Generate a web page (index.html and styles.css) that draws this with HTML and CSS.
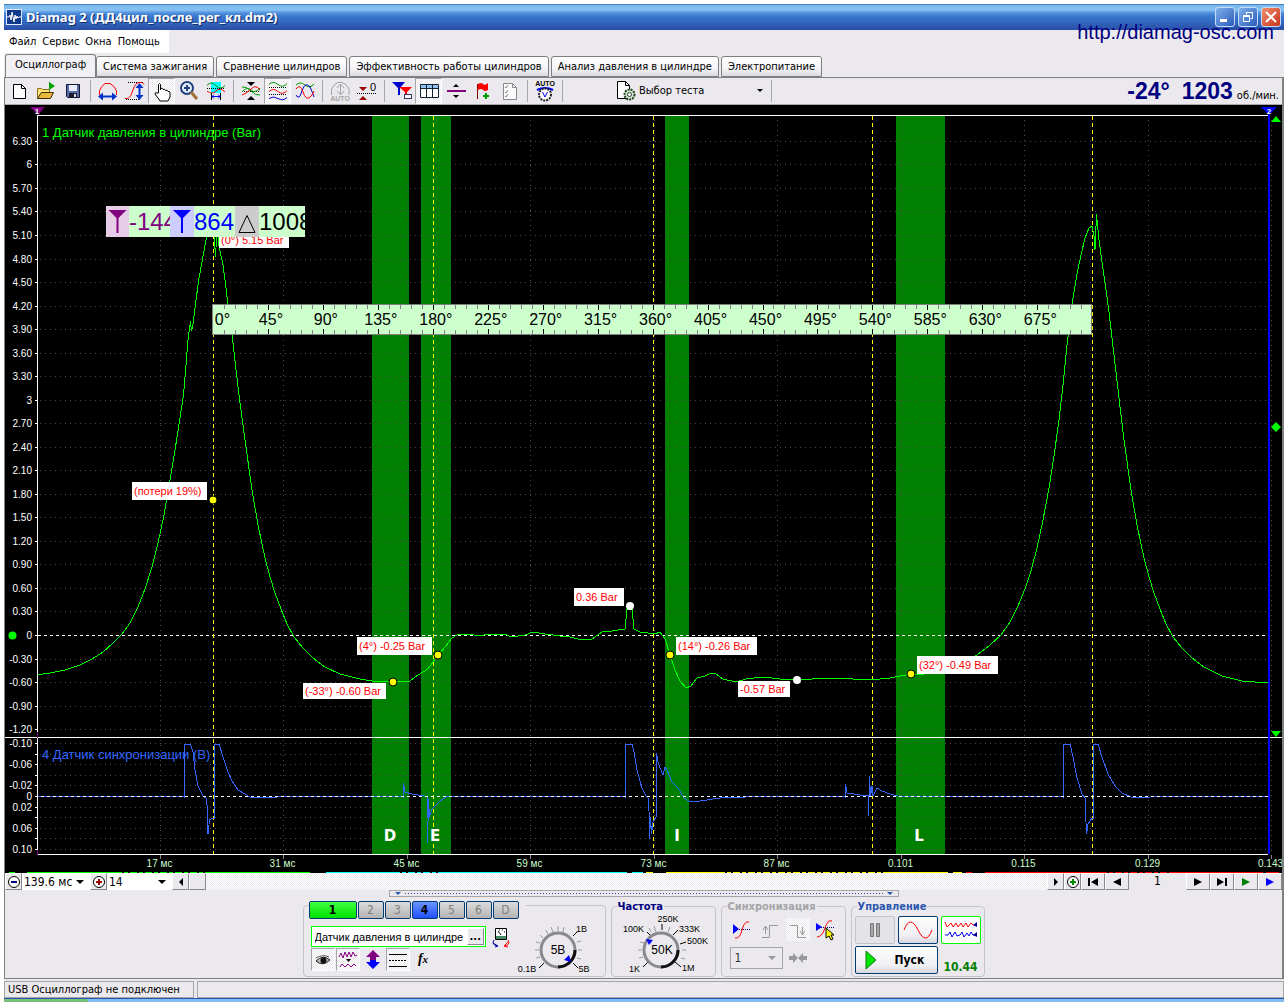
FILE: index.html
```html
<!DOCTYPE html>
<html lang="ru">
<head>
<meta charset="utf-8">
<title>Diamag 2 (ДД4цил_после_рег_кл.dm2)</title>
<link rel="stylesheet" href="styles.css">
</head>
<body>
<div class="window">
  <header class="titlebar">
    <svg class="logo" viewBox="0 0 16 16"><rect width="16" height="16" fill="#dfe9fb"/><rect x="1" y="1" width="14" height="14" fill="#123a8c"/><path d="M1 8h2l1-2 1 5 1-8 2 10 1-7 1 4 1-3 1 2 1-1h2" fill="none" stroke="#fff"/></svg>
    <h1 class="title">Diamag 2 (ДД4цил_после_рег_кл.dm2)</h1>
    <div class="winbtns">
      <button class="winbtn" aria-label="Свернуть"><svg viewBox="0 0 18 18"><rect x="4" y="11" width="7" height="3" fill="#fff"/></svg></button>
      <button class="winbtn" aria-label="Развернуть"><svg viewBox="0 0 18 18" fill="none" stroke="#fff"><path d="M7.500 6.500v-2h6v6h-2M7 4.500h7M4.500 7.500h6v6h-6zM4 8.500h7"/></svg></button>
      <button class="winbtn winbtn-close" aria-label="Закрыть"><svg viewBox="0 0 18 18"><path d="M4 4l10 10M14 4L4 14" stroke="#fff" stroke-width="2"/></svg></button>
    </div>
    <a class="site" href="http://diamag-osc.com">http://diamag-osc.com</a>
  </header>

  <nav class="menu">
    <button>Файл</button><button>Сервис</button><button>Окна</button><button>Помощь</button>
  </nav>

  <nav class="tabs">
    <button class="tab tab-active">Осциллограф</button>
    <button class="tab">Система зажигания</button>
    <button class="tab">Сравнение цилиндров</button>
    <button class="tab">Эффективность работы цилиндров</button>
    <button class="tab">Анализ давления в цилиндре</button>
    <button class="tab">Электропитание</button>
  </nav>

  <main class="page">
    <div class="toolbar">
      <button class="tool" aria-label="Новый"><svg viewBox="0 0 22 22"><path d="M5.500 4.500h8l4 4v10h-12z" fill="#fff" stroke="#000"/><path d="M13.500 4.500v4h4" fill="none" stroke="#000"/></svg></button>
      <button class="tool" aria-label="Открыть"><svg viewBox="0 0 22 22"><path d="M2.500 18.500v-10h4l1 1h7v3" fill="#ffe27a" stroke="#8a6d1a"/><path d="M2.500 18.500l4-6h12l-3 6z" fill="#e8b93c" stroke="#3c2c00"/><path d="M14.500 2v8" stroke="#064"/><path d="M14 2l6 4-6 4z" fill="#00a000"/></svg></button>
      <button class="tool" aria-label="Сохранить"><svg viewBox="0 0 22 22"><path d="M4.500 4.500h13v13h-12l-1-1z" fill="#5b6fae" stroke="#14142c"/><rect x="7" y="5" width="8" height="6" fill="#e8eefc"/><rect x="7" y="13" width="8" height="4" fill="#1c1c30"/><rect x="12" y="14" width="2" height="3" fill="#ddd"/></svg></button>
      <span class="sep"></span>
      <button class="tool" aria-label="Масштаб по времени"><svg viewBox="0 0 22 22"><path d="M2.500 15V11Q4 6 8 3.500h5Q18 6 19.500 11V15" fill="none" stroke="#f00"/><path d="M4 16.500h13" stroke="#03c" stroke-width="2"/><path d="M1 16.500l5-4v8zM20 16.500l-5-4v8z" fill="#03c"/></svg></button>
      <button class="tool" aria-label="Масштаб по уровню"><svg viewBox="0 0 22 22"><path d="M4 2.500h16M2 19.500h14" stroke="#000" stroke-dasharray="1 1"/><path d="M1 18.500h3Q7 17 9 10t6-7.500h3l2 2" fill="none" stroke="#f00"/><path d="M15.500 6v11" stroke="#03c" stroke-width="2"/><path d="M15.500 3l-4 5h8zM15.500 20l-4-5h8z" fill="#03c"/></svg></button>
      <button class="tool pressed" aria-label="Рука"><svg viewBox="0 0 22 22"><path d="M7.500 13V4.500q1-2 2 0V10V8.500q2-1 2.500 1q2-1 2.500 1q2-1 2.500 1q2-.5 2 1.500v4l-2 4h-8l-2-3-3-4q0-2 2-1z" fill="#fff" stroke="#000"/></svg></button>
      <button class="tool" aria-label="Лупа"><svg viewBox="0 0 22 22"><circle cx="9" cy="8" r="6" fill="#dfeefc" stroke="#24407c" stroke-width="2"/><path d="M6 8h6M9 5v6" stroke="#24407c" stroke-width="2"/><path d="M13 12l6 7" stroke="#a07030" stroke-width="3"/></svg></button>
      <button class="tool" aria-label="Фрагмент"><svg viewBox="0 0 22 22"><rect x="6" y="2" width="10" height="11" fill="#0ff"/><path d="M2 5.500q4-5 9 0t9 0" fill="none" stroke="#080"/><path d="M2 8.500h18" stroke="#000" stroke-dasharray="1 1"/><path d="M2 11q5 4 9 0t9 1" fill="none" stroke="#f00"/><path d="M6.500 13v7M15.500 13v7" stroke="#000"/><path d="M7 16.500h8M9 14.500l-2 2 2 2M13 14.500l2 2-2 2" fill="none" stroke="#00f"/></svg></button>
      <span class="sep"></span>
      <button class="tool" aria-label="Совместить"><svg viewBox="0 0 22 22"><path d="M7 2h8l-4 4zM7 20h8l-4-4z"/><path d="M2 11.500h18" stroke="#000" stroke-dasharray="1 1"/><path d="M2 7q4-1 9 4t9 4M2 12q5-6 9-2t9-2" fill="none" stroke="#090"/><path d="M2 15q4-1 9-6t9 1" fill="none" stroke="#f00"/></svg></button>
      <button class="tool pressed" aria-label="Раздельно"><svg viewBox="0 0 22 22"><path d="M2 4.500q4-4 9 0t9-1" fill="none" stroke="#090"/><path d="M2 7.500h18M2 14.500h18" stroke="#000" stroke-dasharray="1 1"/><path d="M2 11.500q4-4 9 0t9-1" fill="none" stroke="#f00"/><path d="M2 18.500q4-3 9 0t9-1" fill="none" stroke="#00c"/></svg></button>
      <button class="tool" aria-label="Наложение"><svg viewBox="0 0 22 22"><path d="M2 5q4-4 9 0t9-1" fill="none" stroke="#090"/><path d="M2 15q3 6 6-4t8-4q2 4 4 10" fill="none" stroke="#00c"/><path d="M2 9q4-6 7 3t7 5q2-1 4-6" fill="none" stroke="#f00"/></svg></button>
      <span class="sep"></span>
      <button class="tool" disabled aria-label="Авто"><svg viewBox="0 0 22 22"><path d="M2.500 15V9Q6 3 9 2.500h4Q17 3 20 9V15M11.500 5v9M8 8l3.500-4L15 8M8 11l3.500 4L15 11" fill="none" stroke="#a5a5a8"/><text x="11" y="21" class="tiny" fill="#a5a5a8">AUTO</text></svg></button>
      <button class="tool" aria-label="Ноль"><svg viewBox="0 0 22 22"><path d="M3 7h8l-4 4zM3 20h8l-4-4z" fill="#900"/><path d="M1 13.500h20" stroke="#000" stroke-dasharray="1 1"/><text x="17" y="11" class="small">0</text></svg></button>
      <span class="sep"></span>
      <button class="tool" aria-label="Маркеры"><svg viewBox="0 0 22 22"><path d="M1 2h13L9 8v7H7V8z" fill="#00c"/><path d="M8 7h13l-5 5v4h-2v-4z" fill="#f00"/><rect x="13.500" y="14.500" width="7" height="4" fill="#fff" stroke="#336"/></svg></button>
      <button class="tool pressed" aria-label="Таблица"><svg viewBox="0 0 22 22"><path d="M2.500 4.500h18v13h-18z" fill="#fff" stroke="#123"/><path d="M3 5h17v3H3z" fill="#8fc0f0"/><path d="M3 8.500h17M8.500 5v13M14.500 5v13" stroke="#123"/></svg></button>
      <button class="tool" aria-label="Разделить"><svg viewBox="0 0 22 22"><path d="M2 11h19" stroke="#800080" stroke-width="2"/><path d="M8 7h6l-3-3zM8 15h6l-3 3z"/></svg></button>
      <button class="tool" aria-label="Флаг"><svg viewBox="0 0 22 22"><path d="M5.500 4v15" stroke="#800000"/><path d="M6 4q3-2 5 0t5-1v7q-3 2-5 0t-5 0z" fill="#f00"/><path d="M11 16h6M14 13v6" stroke="#090" stroke-width="2"/></svg></button>
      <button class="tool" disabled aria-label="Список"><svg viewBox="0 0 22 22"><path d="M4.500 3.500h9l4 4v12h-13z" fill="#fafafa" stroke="#888"/><path d="M13.500 3.500v4h4M6 7l1 1 2-3M6 12l1 1 2-3M6 16l1 1 2-3" fill="none" stroke="#888"/></svg></button>
      <span class="sep"></span>
      <button class="tool" aria-label="Авто напряжение"><svg viewBox="0 0 22 22"><text x="11" y="6" class="tiny">AUTO</text><path d="M3 10q8-4 16 0" fill="none" stroke="#00f" stroke-width="2"/><circle cx="11" cy="14.500" r="6" fill="#fff" stroke="#222" stroke-width="2" stroke-dasharray="2 1"/><path d="M8.500 12l2.500 5 2.500-5" fill="none" stroke="#00f"/></svg></button>
      <span class="sep"></span>
      <label class="test">
        <svg viewBox="0 0 22 22"><path d="M3.500 1.500h8l4 4v13h-12z" fill="#fff" stroke="#000"/><path d="M11.500 1.500v4h4" fill="none" stroke="#000"/><circle cx="15.500" cy="14.500" r="5" fill="#cfe8cf" stroke="#264026" stroke-width="2" stroke-dasharray="2 1"/><circle cx="15.500" cy="14.500" r="2" fill="#fff" stroke="#264026"/></svg>
        <span class="pick"><select aria-label="Выбор теста"><option>Выбор теста</option></select></span>
      </label>
      <span class="sep"></span>
      <p class="rpm"><b>-24°</b><b>1203</b> об./мин.</p>
    </div>

    <svg id="scope" class="scope" viewBox="5 105 1277 768" role="img" aria-label="Осциллограмма"></svg>

    <div class="scroll">
      <button class="flat" aria-label="Уменьшить"><svg viewBox="0 0 14 14"><circle cx="7" cy="7" r="5.500" fill="#fff" stroke="#000"/><path d="M4 7h6" stroke="#000080" stroke-width="2"/></svg></button>
      <span class="pick pick-span"><select aria-label="Длительность"><option>139.6 мс</option></select></span>
      <button class="flat" aria-label="Увеличить"><svg viewBox="0 0 14 14"><circle cx="7" cy="7" r="5.500" fill="#fff" stroke="#000"/><path d="M4 7h6M7 4v6" stroke="#900" stroke-width="2"/></svg></button>
      <span class="pick pick-zoom"><select aria-label="Масштаб"><option>14</option></select></span>
      <button class="flat" aria-label="Влево"><svg viewBox="0 0 14 14"><path d="M9 3v8L5 7z"/></svg></button>
      <div class="track"><button class="flat" aria-label="Ползунок"></button></div>
      <button class="flat" aria-label="Вправо"><svg viewBox="0 0 14 14"><path d="M5 3v8l4-4z"/></svg></button>
      <button class="flat" aria-label="Добавить"><svg viewBox="0 0 14 14"><circle cx="7" cy="7" r="5.500" fill="#fff" stroke="#000"/><path d="M4 7h6M7 4v6" stroke="#080" stroke-width="2"/></svg></button>
      <button class="flat wide" aria-label="В начало"><svg viewBox="0 0 14 14"><path d="M2 3h2v8H2zM12 3v8L5 7z"/></svg></button>
      <button class="flat wide" aria-label="Назад"><svg viewBox="0 0 14 14"><path d="M11 3v8L3 7z"/></svg></button>
      <output class="frame">1</output>
      <button class="flat wide" aria-label="Вперёд"><svg viewBox="0 0 14 14"><path d="M3 3v8l8-4z"/></svg></button>
      <button class="flat wide" aria-label="В конец"><svg viewBox="0 0 14 14"><path d="M10 3h2v8h-2zM2 3v8l7-4z"/></svg></button>
      <button class="flat wide" aria-label="Воспроизвести"><svg viewBox="0 0 14 14"><path d="M3 3v8l8-4z" fill="#008000"/></svg></button>
      <button class="flat wide" aria-label="Далее"><svg viewBox="0 0 14 14"><path d="M3 3v8l8-4z" fill="#00f"/></svg></button>
    </div>

    <div class="splitter"><i></i><span></span><i></i></div>

    <div class="panels">
      <fieldset class="box box-channel" aria-label="Каналы">
        <div class="channels">
          <button class="ch ch-one">1</button><button class="ch" disabled>2</button><button class="ch" disabled>3</button><button class="ch ch-four">4</button><button class="ch" disabled>5</button><button class="ch" disabled>6</button><button class="ch" disabled>D</button>
        </div>
        <div class="chbody">
          <div class="chset">
            <div class="sensor">
              <div class="sensor-box"><input type="text" aria-label="Датчик" value="Датчик давления в цилиндре"><button class="flat" aria-label="Выбрать датчик">...</button></div>
              <button class="tool tool-sm" aria-label="Прибор"><svg viewBox="0 0 22 22"><path d="M5.500 2.500h11v11h-11z" fill="#fff" stroke="#000"/><path d="M6 10h10v3H6z" fill="#486"/><path d="M9 4h1M12 4h1M14 6h1M8 5l3 4" stroke="#000"/><path d="M8 20Q1 19 4 14M3 17l5 3-3 1" fill="none" stroke="#00a"/><path d="M14 20q7-1 4-6M19 15l-5 5 4 1" fill="none" stroke="#f00"/></svg></button>
            </div>
            <div class="views">
              <button class="tool tool-sm pressed" aria-label="Показать"><svg viewBox="0 0 22 22"><path d="M4 12q7-7 14-1-7 7-14 1z" fill="#bbb" stroke="#222"/><circle cx="11.500" cy="11.500" r="3" fill="#111"/><path d="M4 9q7-4 13-1" fill="none" stroke="#555"/></svg></button>
              <button class="tool tool-sm pressed" aria-label="Фильтр"><svg viewBox="0 0 22 22"><path d="M2 8l2-4 2 5 2-6 2 5 2-5 2 5 2-5 2 4 2-1M3 18l2-3 3 3 3-3 3 3 3-3 2 2" fill="none" stroke="#800080"/><path d="M9 10h5l-2.500 3z"/></svg></button>
              <button class="tool tool-sm" aria-label="Инверсия"><svg viewBox="0 0 22 22"><path d="M11 1l7 7h-4v3H8V8H4z" fill="#800080"/><path d="M11 20l7-7h-4v-2H8v2H4z" fill="#00f"/></svg></button>
              <button class="tool tool-sm pressed" aria-label="Уровни"><svg viewBox="0 0 22 22"><path d="M2 5.500h18M2 17.500h18" stroke="#000"/><path d="M2 11.500h18" stroke="#000" stroke-dasharray="2 1"/></svg></button>
              <button class="tool tool-sm" aria-label="Функция"><svg viewBox="0 0 22 22"><text x="11" y="14" class="fx">f<tspan class="fx-x">x</tspan></text></svg></button>
            </div>
          </div>
          <svg class="knob" viewBox="0 0 90 57" width="90" height="57" role="img" aria-label="Чувствительность">
            <g stroke="#999"><path d="M22 31h4M23 23l4 1M27 16l3 3M33 11l2 4M38 8l2 5M45 7v5M51 8l-1 5M64 23l4-1M65 31h4M64 39l4 1M23 39l4-1"/></g>
            <path d="M60 17l4-4M60 44l5 5M31 44l-5 5" stroke="#000"/>
            <circle cx="45" cy="31" r="17" class="dial"/><path d="M45 48A17 17 0 0 0 62 31" class="dial-shade"/>
            <path d="M58 43l-7-2 5-5z" fill="#00f"/>
            <text x="45" y="35" class="value">5В</text><text x="63" y="13">1В</text><text x="14" y="53" text-anchor="middle">0.1В</text><text x="71" y="53" text-anchor="middle">5В</text>
          </svg>
        </div>
      </fieldset>

      <fieldset class="box box-freq"><legend>Частота</legend>
        <svg class="knob" viewBox="0 0 103 64" width="103" height="64" role="img" aria-label="50K">
          <g stroke="#999"><path d="M26 38h4M27 46l4-1M28 30l4 1M42 14l2 6M37 16l2 4M58 15l-2 5M69 46l4 1M70 38h4"/></g>
          <path d="M50 12v6M35 20l5 5M61 23l5-5M68 32l6-2M63 50l6 5M36 50l-5 5" stroke="#000"/>
          <circle cx="49" cy="38" r="17" class="dial"/><path d="M49 55A17 17 0 0 0 66 38" class="dial-shade"/>
          <path d="M34 27l7 1-4 5z" fill="#00f"/>
          <text x="50" y="42" class="value">50K</text><text x="56" y="10" text-anchor="middle">250K</text><text x="11" y="20">100K</text><text x="67" y="20">333K</text><text x="75" y="32">500K</text><text x="17" y="60">1K</text><text x="70" y="59">1M</text>
        </svg>
      </fieldset>

      <fieldset class="box box-sync"><legend>Синхронизация</legend>
        <div class="syncrow">
          <button class="tool tool-sm" aria-label="Уровень"><svg viewBox="0 0 22 22"><path d="M2 5l6 5-6 5z" fill="#00f"/><path d="M6 10.500h13" stroke="#009" stroke-dasharray="1 1"/><path d="M4 19q5 1 7-8t7-8" fill="none" stroke="#f00"/></svg></button>
          <button class="tool tool-sm" disabled aria-label="Фронт"><svg viewBox="0 0 22 22"><path d="M3 18.500h7.500v-12H19M6.500 8v7M4 11l2.500-4L9 11" fill="none" stroke="#999"/></svg></button>
          <button class="tool tool-sm dither" disabled aria-label="Спад"><svg viewBox="0 0 22 22"><path d="M3 6.500h7.500v12H19M15.500 8v7M13 12l2.500 4L18 12" fill="none" stroke="#999"/></svg></button>
          <button class="tool tool-sm" aria-label="Захват"><svg viewBox="0 0 22 22"><path d="M1 4l6 4-6 4z" fill="#00f"/><path d="M6 8.500h14" stroke="#009" stroke-dasharray="1 1"/><path d="M2 18q5 0 8-9t7-7" fill="none" stroke="#f00"/><path d="M11 9v10l3-2 2 4 2-1-2-4h3z" fill="#ff0" stroke="#000"/></svg></button>
        </div>
        <div class="syncrow">
          <span class="pick pick-sync"><select disabled aria-label="Канал синхронизации"><option>1</option></select></span>
          <svg class="merge" viewBox="0 0 22 22"><path d="M2 9h4V6l5 5-5 5v-3H2zM20 9h-4V6l-5 5 5 5v-3h4z" fill="#999"/></svg>
        </div>
      </fieldset>

      <fieldset class="box box-run"><legend>Управление</legend>
        <div class="run">
          <button class="xp" disabled aria-label="Пауза"><svg viewBox="0 0 34 22"><path d="M12.500 4.500h3v13h-3zM18.500 4.500h3v13h-3z" fill="#aaa" stroke="#777"/></svg></button>
          <button class="xp" aria-label="Один сигнал"><svg viewBox="0 0 34 22"><path d="M3 11Q9-5 17 11t14 0" fill="none" stroke="#f00"/></svg></button>
          <button class="xp xp-on" aria-label="Все сигналы"><svg viewBox="0 0 34 22"><path d="M1 3l2 5 2-2 2-2 2 4 3-4 2 4 3-4 2 4 3-4 2 4 3-4 2 2h4" fill="none" stroke="#f00"/><path d="M1 16h3l2-3 2 5 3-5 2 4 3-1 2-3 2 5 3-4 2 3 2-4 2 3h3" fill="none" stroke="#00f"/><path d="M33 3v5l-4-2zM33 13v5l-4-2z" fill="#009"/></svg></button>
          <button class="xp xp-start"><svg viewBox="0 0 12 20"><path d="M1 1l10 9L1 19z" fill="#00e600" stroke="#087808"/></svg>Пуск</button>
          <output class="clock">10.44</output>
        </div>
      </fieldset>
    </div>
  </main>

  <footer class="status"><span>USB Осциллограф не подключен</span><span></span></footer>
  <div class="taskbar"><i></i></div>
</div>
<script src="scope.js"></script>
</body>
</html>
```
FILE: styles.css
```css
* { box-sizing: border-box; }
body {
  margin: 0;
  background: #fff;
  color: #000;
  font: 11px/14px Tahoma, "DejaVu Sans Condensed", "DejaVu Sans", sans-serif;
}
button, input, select, fieldset, legend, p, h1 { font: inherit; color: inherit; margin: 0; padding: 0; }
button { border: 0; background: none; }
svg { display: block; }
.window { margin: 4px 4px 0; }

/* title bar */
.titlebar {
  position: relative;
  display: flex;
  align-items: center;
  gap: 4px;
  height: 26px;
  padding: 0 3px 0 2px;
  background: linear-gradient(#1c48a8 0, #7ab8ee 1px, #86c2f2 6px, #4f8fdc 9px, #3576cd 13px, #3468bf 18px, #2a50a8 25px);
}
.logo { width: 16px; height: 16px; }
.title { flex: 1; color: #fff; font: bold 13px/18px "Noto Sans", "Open Sans", sans-serif; text-shadow: 1px 1px #16306c; white-space: nowrap; }
.winbtns { display: flex; gap: 3px; }
.winbtn {
  width: 20px; height: 20px;
  border: 1px solid #c4dcfa; border-radius: 3px;
  background: linear-gradient(135deg, #7fb0ee, #2a5cb8);
}
.winbtn-close { background: linear-gradient(135deg, #f0906c, #c8341c); }
.site {
  position: absolute; right: 10px; top: 16px;
  color: #000080; font: 20px/24px "Liberation Sans", Arial, sans-serif; text-decoration: none;
}

/* menu and tabs */
.menu, .tabs { background: #ebe9ed; }
.menu { display: flex; height: 24px; padding-bottom: 1px; }
.menu button { background: #fff; padding: 0 3px; }
.menu button:first-child { padding-left: 5px; }
.menu button:last-child { padding-right: 9px; }
.tabs { display: flex; align-items: flex-end; gap: 2px; height: 23px; padding-left: 1px; }
.tab {
  height: 21px; padding: 0 6px;
  border: 1px solid #7f7f7f; border-radius: 3px 3px 0 0;
  background: linear-gradient(#fff, #f4f4f6 60%, #dcdbe2);
  white-space: nowrap;
}
.tab-active { height: 23px; padding: 0 9px 2px; border-bottom: 0; background: #f1f0f4; margin-right: -2px; }

.page { border: solid #808080; border-width: 0 2px 1px 1px; background: #ebe9ed; }
.toolbar {
  display: flex; align-items: center;
  height: 28px; padding-bottom: 1px;
  border-top: 1px solid #808080; border-bottom: 1px solid #a8a8ac;
}
.tool { width: 27px; height: 26px; display: grid; place-items: center; }
.tool svg, .merge { width: 22px; height: 22px; }
.tool-sm { width: 24px; height: 23px; }
.pressed, .dither, .track {
  background: repeating-conic-gradient(#fff 0 25%, #ebe9ed 0 50%) 0 0 / 2px 2px;
}
.pressed { border: 1px solid #a5a5a8; border-right-color: #fff; border-bottom-color: #fff; }
.sep { width: 8px; height: 22px; background: linear-gradient(90deg, transparent 4px, #a8a8ac 4px 5px, transparent 5px); }
.tiny { font: bold 7px "Liberation Sans", sans-serif; text-anchor: middle; }
.small { font: 11px "Liberation Sans", sans-serif; text-anchor: middle; }
.fx { font: italic bold 14px "Liberation Serif", serif; text-anchor: middle; }
.fx-x { font-size: 11px; }
.test { display: flex; align-items: center; width: 201px; padding-left: 48px; gap: 3px; }
.test svg { width: 22px; height: 22px; }
.test .pick { flex: 1; }

/* drop-down with its own arrow */
.pick { display: grid; align-items: center; }
.pick select {
  grid-area: 1 / 1; appearance: none; width: 100%; height: 100%;
  border: 0; border-radius: 0; background: transparent; outline: 0; opacity: 1;
}
.pick::after {
  content: ""; grid-area: 1 / 1; justify-self: end; margin-right: 6px;
  border: 4px solid transparent; border-top-color: currentColor; border-bottom: 0; pointer-events: none;
}
.test .pick::after { border-width: 3px 3px 0; margin-right: 4px; }
.rpm { display: flex; align-items: baseline; gap: 4px; margin-left: auto; padding-right: 3px; }
.rpm b { color: #000080; font: bold 23px/24px "Liberation Sans", Arial, sans-serif; }
.rpm b + b { margin-left: 8px; }

/* chart */
.scope { width: 100%; height: auto; background: #000; }
.scope text { font-family: "Liberation Sans", Arial, sans-serif; }
.scope .grid { stroke: #4a4a4a; stroke-dasharray: 1 4; }
.scope .cursor { stroke: #ff0; stroke-dasharray: 4 3; }
.scope .zero { stroke: #fff; stroke-dasharray: 3 3; }
.scope .frame-line { stroke: #fff; }
.scope .axis { fill: #fff; font-size: 10px; text-anchor: end; }
.scope .time { fill: #cfc; font-size: 10px; text-anchor: middle; }
.scope .name { font-size: 13px; }
.scope .phase { fill: #fff; font: bold 15px "DejaVu Sans", sans-serif; text-anchor: middle; }
.scope .note { fill: #f00; font-size: 11px; }
.scope .degree { font-size: 16px; text-anchor: middle; }
.scope .readout { font-size: 24px; }
.scope .flag { fill: #fff; font-size: 8px; font-weight: bold; text-anchor: middle; }
.scope .trace { fill: none; stroke-linejoin: round; shape-rendering: crispEdges; }
.crisp { shape-rendering: crispEdges; }

/* scroll row */
.scroll { display: flex; height: 17px; }
.flat {
  width: 17px; height: 17px; flex: none; display: grid; place-items: center;
  border: 1px solid #fff; border-right-color: #8a8a8e; border-bottom-color: #8a8a8e;
  background: #ebe9ed;
}
.flat svg { width: 14px; height: 14px; }
.wide { width: 24px; }
.scroll .pick { background: #fff; font-size: 12px; }
.scroll .pick select { padding-left: 2px; }
.pick-span { width: 68px; }
.pick-zoom { width: 65px; }
.track { flex: 1; }
.frame { width: 57px; text-align: center; font-size: 12px; line-height: 17px; }

/* lower panel */
.splitter {
  display: flex; align-items: center; gap: 4px;
  width: 510px; height: 7px; margin: 0 auto; padding: 0 5px;
  border: 1px solid #a5a5a8;
}
.splitter span { flex: 1; height: 1px; background: repeating-linear-gradient(90deg, #2a56b0 0 1px, transparent 1px 3px); }
.splitter i { border: 3px solid transparent; border-top-color: #2a56b0; border-bottom: 0; }
.panels { display: flex; justify-content: center; gap: 5px; padding: 4px 0 1px; }
.box { border: 1px solid #c4c3c8; border-radius: 4px; min-width: 0; }
.box legend { margin-left: 5px; padding: 0 1px; line-height: 11px; font-weight: bold; color: #000080; }
.box-channel { width: 303px; margin-top: 4px; padding: 0 0 0 5px; }
.box-freq { width: 105px; }
.box-sync { width: 125px; }
.box-run { width: 134px; }
.box-sync legend { color: #a5a5a8; }
.box-run legend { color: #2a56b0; }
.channels { display: flex; gap: 1px; width: 217px; margin-top: -5px; background: #ebe9ed; }
.ch {
  width: 26px; height: 18px; border: 1px solid #003c74; border-radius: 2px;
  background: linear-gradient(#dcdcdc, #b4b4b4); font-size: 12px;
}
.ch:disabled { color: #808080; }
.ch-one { width: 48px; background: linear-gradient(#40ff40, #00e000); font-weight: bold; }
.ch-four { background: linear-gradient(#6a94ff, #2050ff); font-weight: bold; }
.chbody { display: flex; }
.chset { width: 204px; padding: 7px 0 0 2px; }
.sensor, .views { display: flex; align-items: center; gap: 1px; }
.sensor { gap: 3px; height: 21px; margin-bottom: 1px; }
.sensor-box { display: flex; align-items: center; width: 177px; height: 21px; border: 1px solid #0f0; background: #fff; padding-right: 1px; }
.sensor-box input { flex: 1; min-width: 0; border: 0; padding: 0 0 0 3px; background: none; outline: 0; font-family: "Liberation Sans", Arial, sans-serif; }
.sensor-box .flat { line-height: 8px; font-weight: bold; }
.knob { font: 9px "Liberation Sans", Arial, sans-serif; }
.knob .value { font-size: 12px; text-anchor: middle; }
.dial { fill: #ebe9ed; stroke: #8a8a8e; stroke-width: 3; }
.dial-shade { fill: none; stroke: #111; stroke-width: 3; }
.syncrow { display: flex; align-items: center; gap: 4px; padding: 6px 0 0 8px; }
.pick-sync { width: 53px; height: 22px; border: 1px solid #a5a5a8; font-size: 12px; }
.pick-sync::after { border-top-color: #999; }
.pick-sync select { padding-left: 4px; color: #333; }
.run { display: grid; grid-template-columns: 40px 40px 40px; grid-auto-rows: 28px; gap: 2px 3px; padding: 4px 0 2px 3px; }
.xp { display: grid; place-items: center; border: 1px solid #003c74; border-radius: 2px; background: linear-gradient(#fff, #f0f0f4 70%, #d8d7de); }
.xp svg { width: 34px; height: 22px; }
.xp:disabled { border-color: #c4c3c8; background: #e4e3e7; }
.xp-on { border-color: #0f0; background: #fff; }
.xp-start { grid-column: span 2; display: flex; align-items: center; gap: 18px; padding-left: 9px; font-size: 12px; font-weight: bold; }
.xp-start svg { width: 12px; height: 20px; }
.clock { align-self: end; text-align: center; color: #008000; font-size: 12px; font-weight: bold; }

/* status and task bar */
.status { display: flex; gap: 3px; padding-top: 2px; height: 19px; background: #ebe9ed; }
.status span { flex: 1; border: 1px solid #a5a5a8; padding-left: 3px; line-height: 15px; }
.status span:first-child { flex: none; width: 190px; }
.taskbar { height: 4px; border-top: 1px solid #2a56b0; background: #80bcf0; }
.taskbar i { display: block; width: 84px; height: 3px; background: #78c078; border-radius: 0 3px 0 0; }
```
FILE: scope.js
```js
// Builds the oscillogram: grid, axes, traces, notes and rulers.
const scope = document.getElementById('scope');
const parts = [];
const line = (x1, y1, x2, y2, cls, extra = '') =>
  parts.push(`<line x1="${x1}" y1="${y1}" x2="${x2}" y2="${y2}" class="crisp ${cls}" ${extra}/>`);
const rect = (x, y, w, h, fill, extra = '') =>
  parts.push(`<rect x="${x}" y="${y}" width="${w}" height="${h}" fill="${fill}" ${extra}/>`);
const text = (x, y, cls, value, extra = '') =>
  parts.push(`<text x="${x}" y="${y}" class="${cls}" ${extra}>${value}</text>`);
const path = (d, stroke) =>
  parts.push(`<polyline points="${d}" class="trace" stroke="${stroke}"/>`);

const left = 37.5, right = 1268.5, top_ = 115.5, middle = 737.5, bottom = 854.5;

// valve phases
const phases = [['D', 372, 37, 390], ['E', 421, 30, 435], ['I', 665, 24, 677], ['L', 896, 49, 919]];
phases.forEach(p => rect(p[1], 116, p[2], 738, '#008000'));

// pressure axis
for (let i = 21; i >= -4; i--) {
  const y = Math.round(635 - i * 23.53) + 0.5;
  if (i !== 0) line(40, y, right, y, 'grid');
  line(35, y, 37, y, 'frame-line');
  const v = i * 0.3;
  text(32, y + 3, 'axis', i === 0 ? '0' : i === 20 ? '6' : i === 10 ? '3' : v.toFixed(2));
}
// sync axis
for (let i = -5; i <= 5; i++) {
  const y = Math.round(796 + i * 10.6) + 0.5;
  if (i !== 0) line(40, y, right, y, 'grid');
  line(35, y, 37, y, 'frame-line');
  if (i % 2 !== 0 || i === 0) text(32, y + 3, 'axis', i === 0 ? '0' : (i * 0.02).toFixed(2));
}
// time axis
['17 мс', '31 мс', '45 мс', '59 мс', '73 мс', '87 мс', '0.101', '0.115', '0.129', '0.143'].forEach((t, i) => {
  const x = Math.round(160 + i * 123.45) + 0.5;
  line(x, 120, x, 854, 'grid');
  line(x, 855, x, 859, '', 'stroke="#888"');
  text(x - 1, 867, 'time', t);
});

line(left, 635.5, right, 635.5, 'zero');
[213.5, 433.5, 653.5, 872.5, 1092.5].forEach(x => line(x, 116, x, 854, 'cursor'));

// traces
path('37,675 50,673 65,670 80,665 92,659 103,652 113,643 122,634 130,623 138,607 145,589 152,567 158,543 164,515 170,480 175,450 180,418 183.500,395 186,365 188,340 190,325 190.500,322 191.500,331 193,324 196,300 199,278 202,262 206,240 209,230 212,226 214,232 215.500,257 217.500,220 219,246 223,265 226,288 228,305 232,334 236,370 239,395 245,440 252,490 258,525 265,558 270,577 275,593 281,609 287,624 294,637 303,648 313,658 325,667 340,674 360,679 372,681 393,682 410,681 418,675 428,669 433,662 438,655 446,646 452,638 457,635 470,634 478,636 490,634 505,634 511,637 525,635 533,632 545,634 560,636 570,637 582,640 592,639 602,632 612,631 625,629 627,609 632,609 634,629 640,632 655,634 660,632 665,639 670,655 675,670 680,681 686,688 691,686 697,678 705,676 711,673 716,674 723,679 736,682 746,679 763,677 780,679 797,680 812,679 836,678 870,680 890,678 911,674 924,674 940,670 960,663 977,655 990,645 1001,635 1010,622 1018,606 1025,589 1031,571 1037,548 1043,520 1049,488 1054,456 1059,420 1063,385 1067,345 1070,322 1073,298 1077,274 1081,255 1085,238 1089,228 1092,226 1094,236 1095,250 1096.500,215 1099,240 1102,262 1106,290 1109,312 1112,338 1116,372 1119,398 1124,440 1131,490 1137,525 1144,558 1149,577 1154,593 1160,609 1166,624 1173,637 1182,648 1192,658 1204,667 1222,676 1242,681 1268,683', '#00ff00');
path('37,796.500 184.500,797 184.500,744 190.500,744 193,752 195,770 198,786 203,796 206,798 207.500,808 208,834 209.500,820 213,818 214.500,818 214.500,744 219,744 223,757 228,772 232,781 238,790 245,794 250,797 262,798 285,796.500 403.500,797 403.500,783 405,792 412,794 427,796.500 427.500,818 428.500,800 427.500,843 428.500,800 429.500,817 432,809 440,801 447,796.500 625.500,797 625.500,744 632,744 634,752 637,770 642,788 646,796 648,798 649.500,818 649.500,839 650.500,818 651.500,834 653,822 656.500,816 656.500,753 658,762 660,768 663,775 665,767 667,770 672,782 678,788 684,798 689,801 700,801 720,798 745,797 780,796.500 845.500,797 845.500,784 847,793 860,795 868.500,796 868.500,816 869.500,777 870.500,796 872,786 873,796 877,788 882,791 890,794 900,796.500 1063.500,797 1063.500,744 1070,744 1073,757 1077,778 1082,794 1085,798 1086.500,834 1088,824 1092,818 1093.500,818 1093.500,744 1098,744 1102,757 1108,774 1115,786 1122,793 1131,797 1150,797 1268,796.500', '#3366ff');
line(left, 796.5, right, 796.5, 'zero', 'stroke-dashoffset="3"');

// plot frame
line(left, 116, left, 854, 'frame-line');
line(37, top_, 1268, top_, 'frame-line');
line(5, middle, 1282, middle, 'frame-line');
line(37, bottom, 1268, bottom, 'frame-line');
line(right, 110, right, 854, '', 'stroke="#00f" stroke-width="2"');
line(left, 732, left, 738, '', 'stroke="#800080"');
line(left, 850, left, 855, '', 'stroke="#800080"');
parts.push('<path d="M30 107h15l-7 8z" fill="#800080"/><path d="M1261 107h16l-8 8z" fill="#00f"/>');
text(37, 114, 'flag', '1');
text(1269, 114, 'flag', '2');
parts.push('<path d="M1271 122h10l-5-6zM1271 731h10l-5 6zM1271 427l5-5 5 5-5 5z" fill="#0f0"/><circle cx="12.500" cy="635.500" r="4" fill="#0f0"/>');

text(42, 137, 'name', '1 Датчик давления в цилиндре (Bar)', 'fill="#0f0"');
text(42, 759, 'name', '4 Датчик синхронизации (В)', 'fill="#36f"');
phases.forEach(p => text(p[3], 841, 'phase', p[0]));

// notes
[
  ['(потери 19%)', 132, 482, 75, 18],
  ['(0°) 5.15 Bar', 219, 231, 70, 17],
  ['(4°) -0.25 Bar', 357, 637, 75, 18],
  ['(-33°) -0.60 Bar', 303, 683, 83, 16],
  ['0.36 Bar', 574, 588, 50, 18],
  ['(14°) -0.26 Bar', 676, 637, 81, 18],
  ['-0.57 Bar', 738, 681, 52, 16],
  ['(32°) -0.49 Bar', 917, 656, 81, 18],
].forEach(([t, x, y, w, h]) => { rect(x, y, w, h, '#fff'); text(x + 2, y + h / 2 + 4, 'note', t); });
[[213, 500], [393, 682], [438, 655], [670, 655], [911, 674]].forEach(([x, y]) =>
  parts.push(`<circle cx="${x}" cy="${y}" r="4" fill="#ff0" stroke="#000"/>`));
[[630, 606], [797, 680]].forEach(([x, y]) =>
  parts.push(`<circle cx="${x}" cy="${y}" r="4" fill="#fff"/>`));

// crank angle ruler
rect(212.5, 304.5, 879, 30, '#ccffcc', 'stroke="#808080"');
for (let i = 1; i < 80; i++) {
  const x = Math.round(213 + i * 10.99) + 0.5, major = i % 5 === 0;
  const h = major ? 5 : 4, s = `stroke="${major ? '#000' : '#808080'}"`;
  line(x, 305, x, 305 + h, '', s);
  line(x, 334 - h, x, 334, '', s);
}
for (let i = 0; i < 16; i++) text(i ? 216 + i * 54.95 : 222.5, 325, 'degree', i * 45 + '°');

// cursor readout
[
  [106, 23, '#e6cce6', 41, '-144', '#800080'],
  [170, 24, '#ccccff', 41, '864', '#0000ff'],
  [235, 24, '#cccccc', 46, '1008', '#000000'],
].forEach(([x, w, bg, tw, t, color], i) => {
  rect(x, 206, w, 31, bg);
  rect(x + w, 206, tw, 31, '#ccffcc');
  parts.push(`<svg x="${x + w}" y="206" width="${tw}" height="31"><text x="0" y="24" class="readout" fill="${color}">${t}</text></svg>`);
  const c = x + w / 2;
  parts.push(i < 2
    ? `<path d="M${c - 9} 210h18l-8 8v15h-2v-15z" fill="${color}"/>`
    : `<path d="M${c - 8} 232.500h16l-8-17z" fill="none" stroke="#000"/>`);
});

// record overview, one colour per cylinder
[[9, 15, '#0f0'], [27, 115, '#0f0'], [208, 310, '#0f0'], [326, 393, '#0ff'], [440, 627, '#0ff'], [632, 643, '#0ff'],
 [646, 653, '#ff0'], [666, 718, '#ff0'], [890, 948, '#ff0'], [953, 962, '#ff0'], [966, 972, '#f00'], [985, 1100, '#f00'], [1170, 1263, '#f00'], [1266, 1279, '#f00']]
  .forEach(([a, b, c]) => rect(a, 872, b - a, 1, c));
[[115, 208, '#0f0'], [393, 440, '#0ff'], [718, 890, '#ff0'], [1100, 1170, '#f00']]
  .forEach(([a, b, c]) => line(a, 872.5, b, 872.5, '', `stroke="${c}" stroke-dasharray="7 2 4 2"`));

scope.innerHTML = parts.join('');
```
